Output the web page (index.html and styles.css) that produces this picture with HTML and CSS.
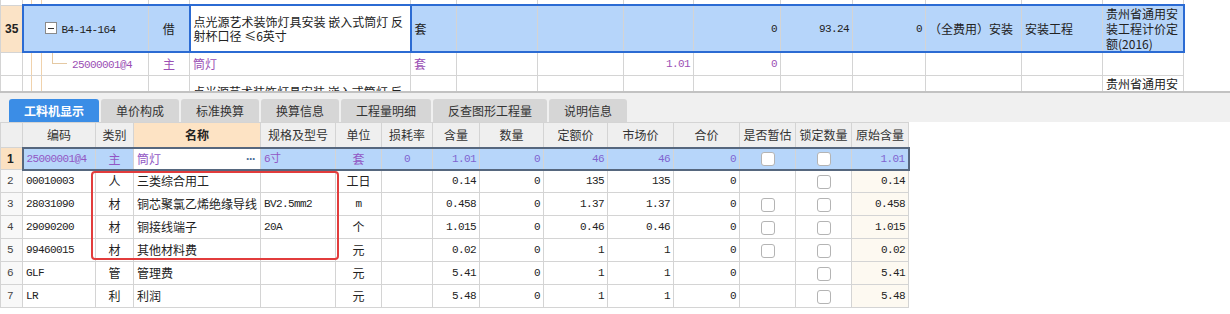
FILE: index.html
```html
<!DOCTYPE html>
<html lang="zh-CN">
<head>
    <meta charset="UTF-8">
    <title>工料机显示</title>
    <link rel="stylesheet" href="styles.css">
</head>
<body>
    <div class="top-pane">
        <table class="grid top-grid">
            <colgroup>
                <col class="w22"><col class="w126"><col class="w41"><col class="w221"><col class="w46">
                <col class="w81"><col class="w86"><col class="w70"><col class="w87"><col class="w72">
                <col class="w73"><col class="w96"><col class="w81"><col class="w81">
            </colgroup>
            <tr class="stub">
                <td></td><td class="tree"></td><td></td><td></td><td></td><td></td><td></td>
                <td></td><td></td><td></td><td></td><td></td><td></td><td></td>
            </tr>
            <tr class="sel">
                <td class="rowno">35</td>
                <td class="tree first"><span class="toggle"></span><span class="mono">B4-14-164</span></td>
                <td class="ctr">借</td>
                <td class="active wrap">点光源艺术装饰灯具安装 嵌入式筒灯 反射杯口径 ≤6英寸</td>
                <td>套</td>
                <td></td><td></td><td></td>
                <td class="num mono">0</td>
                <td class="num mono">93.24</td>
                <td class="num mono">0</td>
                <td>（全费用）安装</td>
                <td>安装工程</td>
                <td class="wrap last">贵州省通用安装工程计价定额(2016)</td>
            </tr>
            <tr class="child">
                <td class="rowno"></td>
                <td class="tree leaf"><span class="mono">25000001@4</span></td>
                <td class="ctr">主</td>
                <td>筒灯</td>
                <td>套</td>
                <td></td><td></td>
                <td class="num mono">1.01</td>
                <td class="num mono">0</td>
                <td></td><td></td><td></td><td></td><td></td>
            </tr>
            <tr class="next">
                <td></td><td class="tree"></td><td></td>
                <td class="wrap">点光源艺术装饰灯具安装 嵌入式筒灯 反射杯口径 ≤6英寸</td>
                <td></td><td></td><td></td><td></td><td></td><td></td><td></td><td></td><td></td>
                <td class="wrap">贵州省通用安装工程计价定额(2016)</td>
            </tr>
        </table>
    </div>

    <div class="splitter"></div>

    <div class="tabs">
        <div class="tab on">工料机显示</div>
        <div class="tab">单价构成</div>
        <div class="tab">标准换算</div>
        <div class="tab">换算信息</div>
        <div class="tab">工程量明细</div>
        <div class="tab">反查图形工程量</div>
        <div class="tab">说明信息</div>
    </div>

    <div class="grid-wrap">
        <table class="grid bottom-grid">
            <colgroup>
                <col class="w22"><col class="w73"><col class="w38"><col class="w127"><col class="w75">
                <col class="w46"><col class="w51"><col class="w47"><col class="w64"><col class="w64">
                <col class="w66"><col class="w66"><col class="w56"><col class="w56"><col class="w57">
            </colgroup>
            <tr class="head">
                <th></th><th>编码</th><th>类别</th><th class="hl">名称</th><th>规格及型号</th><th>单位</th>
                <th>损耗率</th><th>含量</th><th>数量</th><th>定额价</th><th>市场价</th><th>合价</th>
                <th>是否暂估</th><th>锁定数量</th><th>原始含量</th>
            </tr>
            <tr class="cur">
                <td class="rowno">1</td>
                <td class="mono first">25000001@4</td>
                <td class="ctr">主</td>
                <td class="active"><span class="more">···</span>筒灯</td>
                <td class="mono">6寸</td>
                <td class="ctr">套</td>
                <td class="ctr mono">0</td>
                <td class="num mono">1.01</td>
                <td class="num mono">0</td>
                <td class="num mono">46</td>
                <td class="num mono">46</td>
                <td class="num mono">0</td>
                <td class="ctr"><span class="chk"></span></td>
                <td class="ctr"><span class="chk"></span></td>
                <td class="num mono last">1.01</td>
            </tr>
            <tr>
                <td class="rowno">2</td><td class="mono">00010003</td><td class="ctr">人</td><td>三类综合用工</td><td></td>
                <td class="ctr">工日</td><td></td><td class="num mono">0.14</td><td class="num mono">0</td>
                <td class="num mono">135</td><td class="num mono">135</td><td class="num mono">0</td>
                <td></td><td class="ctr"><span class="chk"></span></td><td class="num mono orig">0.14</td>
            </tr>
            <tr>
                <td class="rowno">3</td><td class="mono">28031090</td><td class="ctr">材</td><td>铜芯聚氯乙烯绝缘导线</td><td class="mono">BV2.5mm2</td>
                <td class="ctr mono">m</td><td></td><td class="num mono">0.458</td><td class="num mono">0</td>
                <td class="num mono">1.37</td><td class="num mono">1.37</td><td class="num mono">0</td>
                <td class="ctr"><span class="chk"></span></td><td class="ctr"><span class="chk"></span></td><td class="num mono orig">0.458</td>
            </tr>
            <tr>
                <td class="rowno">4</td><td class="mono">29090200</td><td class="ctr">材</td><td>铜接线端子</td><td class="mono">20A</td>
                <td class="ctr">个</td><td></td><td class="num mono">1.015</td><td class="num mono">0</td>
                <td class="num mono">0.46</td><td class="num mono">0.46</td><td class="num mono">0</td>
                <td class="ctr"><span class="chk"></span></td><td class="ctr"><span class="chk"></span></td><td class="num mono orig">1.015</td>
            </tr>
            <tr>
                <td class="rowno">5</td><td class="mono">99460015</td><td class="ctr">材</td><td>其他材料费</td><td></td>
                <td class="ctr">元</td><td></td><td class="num mono">0.02</td><td class="num mono">0</td>
                <td class="num mono">1</td><td class="num mono">1</td><td class="num mono">0</td>
                <td class="ctr"><span class="chk"></span></td><td class="ctr"><span class="chk"></span></td><td class="num mono orig">0.02</td>
            </tr>
            <tr>
                <td class="rowno">6</td><td class="mono">GLF</td><td class="ctr">管</td><td>管理费</td><td></td>
                <td class="ctr">元</td><td></td><td class="num mono">5.41</td><td class="num mono">0</td>
                <td class="num mono">1</td><td class="num mono">1</td><td class="num mono">0</td>
                <td></td><td class="ctr"><span class="chk"></span></td><td class="num mono orig">5.41</td>
            </tr>
            <tr>
                <td class="rowno">7</td><td class="mono">LR</td><td class="ctr">利</td><td>利润</td><td></td>
                <td class="ctr">元</td><td></td><td class="num mono">5.48</td><td class="num mono">0</td>
                <td class="num mono">1</td><td class="num mono">1</td><td class="num mono">0</td>
                <td></td><td class="ctr"><span class="chk"></span></td><td class="num mono orig">5.48</td>
            </tr>
        </table>
        <div class="mark"></div>
    </div>
</body>
</html>
```

FILE: styles.css
```css
* {
    box-sizing: border-box;
}

body {
    margin: 0;
    font-family: "Noto Sans CJK SC", "Noto Sans", sans-serif;
    font-size: 12px;
    color: #222;
    background: #fff;
    overflow: hidden;
}

.mono {
    font-family: "Liberation Mono", "Noto Sans CJK SC", monospace;
    font-size: 11px;
    letter-spacing: -0.6px;
}

/* shared grid */
.grid {
    border-collapse: collapse;
    table-layout: fixed;
}

.grid td,
.grid th {
    border: 1px solid #d4d4d4;
    padding: 0 3px;
    white-space: nowrap;
    overflow: hidden;
    line-height: 14px;
}

.grid .wrap {
    white-space: normal;
    word-break: break-all;
    padding-right: 0;
}

.ctr { text-align: center; }
.num { text-align: right; }

.w22 { width: 22px; }
.w38 { width: 38px; }
.w41 { width: 41px; }
.w46 { width: 46px; }
.w47 { width: 47px; }
.w51 { width: 51px; }
.w56 { width: 56px; }
.w57 { width: 57px; }
.w64 { width: 64px; }
.w66 { width: 66px; }
.w70 { width: 70px; }
.w72 { width: 72px; }
.w73 { width: 73px; }
.w75 { width: 75px; }
.w81 { width: 81px; }
.w86 { width: 86px; }
.w87 { width: 87px; }
.w96 { width: 96px; }
.w126 { width: 126px; }
.w127 { width: 127px; }
.w221 { width: 221px; }

/* top pane */
.top-pane {
    height: 91px;
    overflow: hidden;
    background: #fff;
}

.top-grid {
    width: 1183px;
}

.top-grid .stub td {
    height: 5px;
    padding: 0;
    font-size: 0;
    line-height: 0;
    border-top: none;
}

.top-grid .sel td {
    height: 47px;
    background: #b6d5fa;
    border-top: 2px solid #2b6bd3;
    border-bottom: 2px solid #2b6bd3;
}

.top-grid .sel td.rowno {
    background: #fbe3c6;
    border-top: 1px solid #d4d4d4;
    border-bottom: 1px solid #d4d4d4;
    font-family: "Liberation Sans", sans-serif;
    font-weight: bold;
    font-size: 12px;
    padding: 0 0 0 4px;
}

.top-grid .sel td.first {
    border-left: 2px solid #2b6bd3;
    padding-left: 21px;
    background-image: none;
}

.top-grid .sel td.last {
    border-right: 2px solid #2b6bd3;
    line-height: 15px;
}

.top-grid .sel td.active {
    background: #fff;
    border: 2px solid #2b6bd3;
}

.top-grid .child td {
    height: 23px;
    color: #9b4fb5;
}

.top-grid .next td {
    height: 47px;
}

.top-grid .next td:last-child {
    line-height: 15px;
}

.tree {
    background-image:
        linear-gradient(#f0d2ac, #f0d2ac),
        linear-gradient(#f0d2ac, #f0d2ac);
    background-size: 1px 100%, 1px 100%;
    background-position: 8px 0, 18px 0;
    background-repeat: no-repeat;
}

.top-grid .child .leaf {
    padding-left: 49px;
    background-image:
        linear-gradient(#f0d2ac, #f0d2ac),
        linear-gradient(#f0d2ac, #f0d2ac),
        linear-gradient(#e5c9a3, #e5c9a3),
        linear-gradient(#e5c9a3, #e5c9a3);
    background-size: 1px 100%, 1px 100%, 1px 11px, 15px 1px;
    background-position: 8px 0, 18px 0, 29px 0, 29px 10px;
}

.toggle {
    display: inline-block;
    position: relative;
    width: 12px;
    height: 12px;
    border: 1px solid #8a8a8a;
    background: #fff;
    vertical-align: middle;
    margin: -2px 5px 0 0;
}

.toggle::after {
    content: "";
    position: absolute;
    left: 2px;
    right: 2px;
    top: 5px;
    height: 1px;
    background: #333;
}

.splitter {
    height: 2px;
    background: #c2c2c2;
}

/* tabs */
.tabs {
    display: flex;
    gap: 2px;
    height: 29px;
    padding: 6px 0 0 9px;
    background: #f0f0f0;
}

.tab {
    height: 23px;
    line-height: 23px;
    padding: 0 15px;
    background: #d6d6d6;
    color: #333;
    border-radius: 3px 3px 0 0;
}

.tab.on {
    background: #3b8de6;
    color: #fff;
    font-weight: bold;
}

/* bottom grid */
.grid-wrap {
    position: relative;
    height: 192px;
    background: #fff;
}

.bottom-grid {
    width: 908px;
}

.bottom-grid th {
    height: 25px;
    background: #efefef;
    font-weight: normal;
    color: #333;
    text-align: center;
    padding: 0;
}

.bottom-grid th.hl {
    background: #fde3c4;
    font-weight: bold;
    color: #222;
}

.bottom-grid td {
    height: 23px;
}

.bottom-grid td.rowno {
    background: #f8f8f8;
    font-family: "Liberation Mono", monospace;
    font-size: 11px;
    color: #444;
    padding: 0 0 0 6px;
}

.bottom-grid .cur td {
    height: 22px;
    background: #b7d6fa;
    color: #9256c4;
    border-top: 2px solid #56677e;
    border-bottom: 2px solid #56677e;
}

.bottom-grid .cur td.num,
.bottom-grid .cur td.ctr.mono {
    color: #8064d0;
}

.bottom-grid .cur td.rowno {
    background: #fbe1c2;
    color: #222;
    font-family: "Liberation Sans", sans-serif;
    font-weight: bold;
    font-size: 12px;
    border-top: 1px solid #d4d4d4;
    border-bottom: 1px solid #d4d4d4;
}

.bottom-grid .cur td.first {
    border-left: 2px solid #56677e;
}

.bottom-grid .cur td.last {
    border-right: 2px solid #56677e;
}

.bottom-grid .cur td.active {
    background: #fff;
}

.more {
    float: right;
    font-family: "Liberation Sans", sans-serif;
    font-weight: bold;
    color: #4b6b95;
    letter-spacing: -1px;
    margin-right: 2px;
}

.bottom-grid td.orig {
    background: #fdf9f1;
}

.chk {
    display: inline-block;
    width: 14px;
    height: 14px;
    border: 1px solid #b4b4b4;
    border-radius: 3px;
    background: #fff;
    vertical-align: middle;
}

.mark {
    position: absolute;
    left: 91px;
    top: 49px;
    width: 248px;
    height: 89px;
    border: 2px solid #e23c3c;
    border-radius: 4px;
}
```
